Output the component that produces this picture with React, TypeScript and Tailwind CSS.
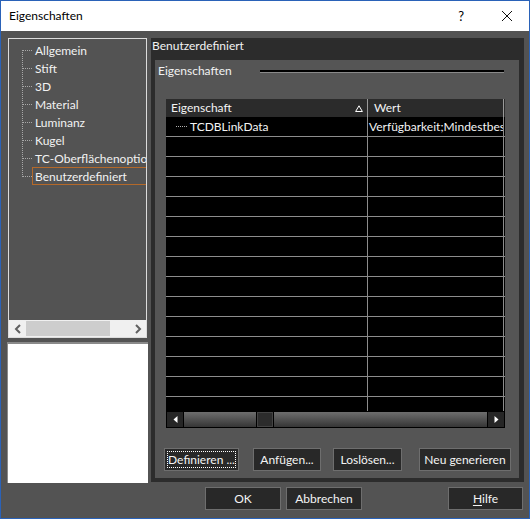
import React from "react";

const treeItems = [
  "Allgemein",
  "Stift",
  "3D",
  "Material",
  "Luminanz",
  "Kugel",
  "TC-Oberflächenoptionen",
  "Benutzerdefiniert",
];

function TreeLines() {
  return (
    <svg width="23" height="144" className="shrink-0">
      <line x1="13.5" y1="9" x2="13.5" y2="136" stroke="#a8a8a8" strokeDasharray="1 1" />
      {treeItems.map((_, i) => (
        <line
          key={i}
          x1="14"
          y1={9.5 + i * 18}
          x2="23"
          y2={9.5 + i * 18}
          stroke="#a8a8a8"
          strokeDasharray="1 1"
        />
      ))}
    </svg>
  );
}

function Chevron({ dir }: { dir: "left" | "right" }) {
  return (
    <svg width="8" height="10" viewBox="0 0 8 10">
      <path
        d={dir === "left" ? "M6 1 L2 5 L6 9" : "M2 1 L6 5 L2 9"}
        fill="none"
        stroke="#606060"
        strokeWidth="2"
      />
    </svg>
  );
}

function Tri({ dir }: { dir: "left" | "right" }) {
  return (
    <svg width="5" height="7" viewBox="0 0 5 7">
      <path d={dir === "left" ? "M4.5 0 L0.5 3.5 L4.5 7 Z" : "M0.5 0 L4.5 3.5 L0.5 7 Z"} fill="#ffffff" />
    </svg>
  );
}

function Btn({
  label,
  w,
  ml,
  focus,
  under,
}: {
  label: string;
  w: string;
  ml: string;
  focus?: boolean;
  under?: boolean;
}) {
  return (
    <div
      className={`${w} ${ml} h-[23px] shrink-0 bg-[#282828] border border-[#6e6e6e] text-[#f4f4f4] p-[2px] flex`}
    >
      <div
        className={`flex-1 flex items-center justify-center leading-[16px] border ${
          focus ? "border-dotted border-white" : "border-transparent"
        }`}
      >
        {under ? (
          <span>
            <span className="underline underline-offset-2">{label[0]}</span>
            {label.slice(1)}
          </span>
        ) : (
          label
        )}
      </div>
    </div>
  );
}

export default function App() {
  const rows = Array.from({ length: 15 });
  return (
    <div className="w-[530px] h-[519px] border border-[#2a62b8] flex flex-col font-['Lato','Noto_Sans',sans-serif] text-[12px] overflow-hidden">
      {/* title bar */}
      <div className="h-[30px] bg-white flex items-center text-black shrink-0">
        <span className="pl-[8px]">Eigenschaften</span>
        <span className="ml-auto text-[13px] leading-none">?</span>
        <svg width="10" height="10" className="ml-[38px] mr-[17px]">
          <path d="M0 0 L10 10 M10 0 L0 10" stroke="#111" strokeWidth="1" />
        </svg>
      </div>

      {/* body */}
      <div className="flex-1 bg-[#535353] flex flex-col">
        <div className="flex pt-[7px] pl-[6px] h-[452px] shrink-0">
          {/* left column */}
          <div className="w-[141px] flex flex-col shrink-0">
            <div className="ml-[1px] w-[139px] h-[300px] border border-[#dcdcdc] flex flex-col">
              <div className="flex-1 flex pt-[2px] overflow-hidden text-[#f2f2f2]">
                <TreeLines />
                <div className="flex flex-col">
                  {treeItems.map((t) => (
                    <div
                      key={t}
                      className={`h-[18px] leading-[17px] pl-[2px] pr-[3px] whitespace-nowrap border ${
                        t === "Benutzerdefiniert" ? "border-[#b4692a]" : "border-transparent"
                      }`}
                    >
                      {t}
                    </div>
                  ))}
                </div>
              </div>
              <div className="h-[17px] bg-[#f0f0f0] flex items-center shrink-0">
                <div className="w-[17px] flex justify-center">
                  <Chevron dir="left" />
                </div>
                <div className="w-[84px] h-[15px] bg-[#cdcdcd]" />
                <div className="flex-1" />
                <div className="w-[17px] flex justify-center">
                  <Chevron dir="right" />
                </div>
              </div>
            </div>
            <div className="mt-[4px] w-[141px] h-[141px] bg-white border-t-2 border-l border-[#8a8a8a]" />
          </div>

          {/* right frame */}
          <div className="ml-[3px] w-[373px] h-[444px] bg-[#2c2c2c] flex flex-col shrink-0">
            <div className="h-[22px] leading-[16px] pl-[1px] text-[#f2f2f2] shrink-0">Benutzerdefiniert</div>
            <div className="ml-[4px] mr-[5px] mb-[4px] flex-1 bg-[#555555] flex flex-col">
              <div className="h-[22px] flex items-center shrink-0">
                <span className="pl-[3px] text-[#f2f2f2]">Eigenschaften</span>
                <div className="ml-auto mr-[15px] w-[244px] h-[3px] bg-black border-b border-[#8a8a8a]" />
              </div>

              {/* table */}
              <div className="mt-[17px] ml-[11px] w-[339px] flex flex-col">
                <div className="h-[18px] bg-[#2b2b2b] flex text-[#f4f4f4]">
                  <div className="w-[202px] flex items-center justify-between pl-[5px] pr-[4px] border-r border-[#9a9a9a]">
                    <span>Eigenschaft</span>
                    <svg width="8" height="7" viewBox="0 0 8 7">
                      <path d="M4 0.8 L7.4 6.5 L0.6 6.5 Z" fill="none" stroke="#ffffff" strokeWidth="1" />
                    </svg>
                  </div>
                  <div className="w-[136px] flex items-center pl-[6px] border-r border-[#9a9a9a]">Wert</div>
                </div>
                <div className="h-[294px] bg-black overflow-hidden">
                  {rows.map((_, i) => (
                    <div key={i} className="h-[20px] flex border-b border-[#8c8c8c] text-[#f4f4f4]">
                      <div className="w-[202px] flex items-center border-r border-[#8c8c8c]">
                        {i === 0 && (
                          <>
                            <svg width="12" height="2" className="ml-[10px]">
                              <line x1="0" y1="0.5" x2="12" y2="0.5" stroke="#b0b0b0" strokeDasharray="1 1" />
                            </svg>
                            <span className="ml-[2px]">TCDBLinkData</span>
                          </>
                        )}
                      </div>
                      <div className="w-[136px] flex items-center pl-[1px] overflow-hidden whitespace-nowrap border-r border-[#8c8c8c]">
                        {i === 0 && "Verfügbarkeit;Mindestbestand"}
                      </div>
                    </div>
                  ))}
                </div>
                <div className="h-[17px] bg-black flex gap-[1px] p-[1px]">
                  <div className="w-[16px] bg-[#262626] flex items-center justify-center">
                    <Tri dir="left" />
                  </div>
                  <div className="w-[72px] bg-linear-to-b from-[#6e6e6e] to-[#363636]" />
                  <div className="w-[16px] bg-[#2c2c2c] border border-[#444]" />
                  <div className="flex-1 bg-linear-to-b from-[#6e6e6e] to-[#363636]" />
                  <div className="w-[16px] bg-[#262626] flex items-center justify-center">
                    <Tri dir="right" />
                  </div>
                </div>
              </div>

              {/* group buttons */}
              <div className="mt-[20px] flex">
                <Btn label="Definieren ..." w="w-[75px]" ml="ml-[9px]" focus />
                <Btn label="Anfügen..." w="w-[68px]" ml="ml-[14px]" />
                <Btn label="Loslösen..." w="w-[69px]" ml="ml-[12px]" />
                <Btn label="Neu generieren" w="w-[92px]" ml="ml-[17px]" />
              </div>
            </div>
          </div>
        </div>

        {/* dialog buttons */}
        <div className="mt-[4px] flex">
          <Btn label="OK" w="w-[76px]" ml="ml-[204px]" />
          <Btn label="Abbrechen" w="w-[76px]" ml="ml-[5px]" />
          <Btn label="Hilfe" w="w-[75px]" ml="ml-[86px]" under />
        </div>
      </div>
    </div>
  );
}
